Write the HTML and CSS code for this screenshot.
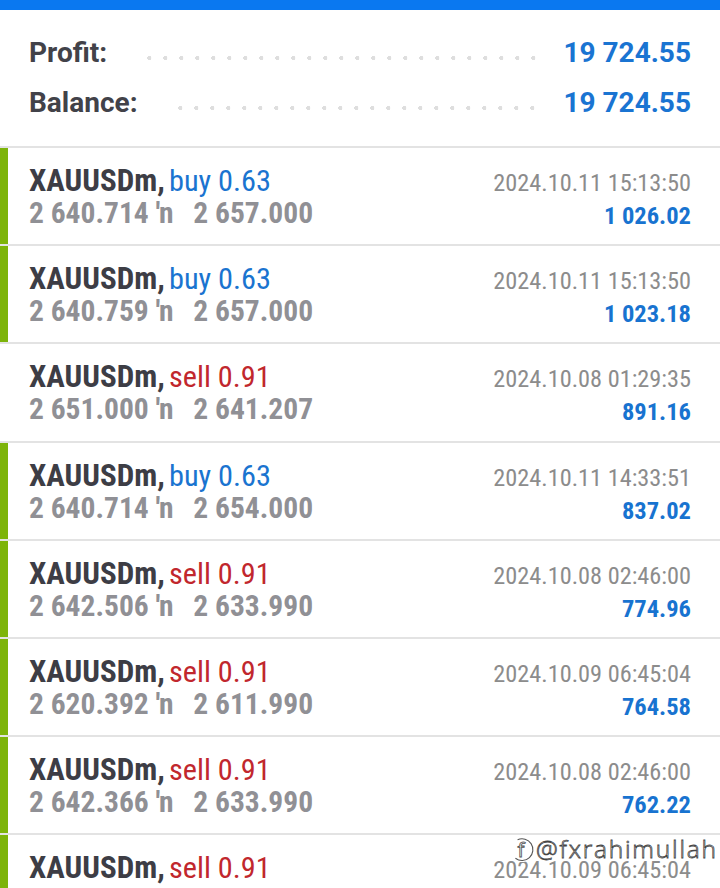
FILE: index.html
```html
<!DOCTYPE html>
<html lang="en">
<head>
  <meta charset="UTF-8" />
  <meta name="viewport" content="width=device-width, initial-scale=1.0"/>
  <title>History</title>
  <link rel="stylesheet" href="styles.css">
</head>
<body>
  <div class="top-bar"></div>

  <div class="summary">
    <div class="sum-row">
      <span class="sum-label">Profit:</span>
      <span class="leader"></span>
      <span class="sum-value">19 724.55</span>
    </div>
    <div class="sum-row balance">
      <span class="sum-label">Balance:</span>
      <span class="leader"></span>
      <span class="sum-value">19 724.55</span>
    </div>
  </div>

  <div class="trades">
    <div class="trade flag">
      <div class="trade-left">
        <div class="deal">XAUUSDm, <span class="buy">buy 0.63</span></div>
        <div class="prices">2 640.714 <span class="arrow">′n</span> 2 657.000</div>
      </div>
      <div class="trade-right">
        <div class="time">2024.10.11 15:13:50</div>
        <div class="profit">1 026.02</div>
      </div>
    </div>
    <div class="trade flag">
      <div class="trade-left">
        <div class="deal">XAUUSDm, <span class="buy">buy 0.63</span></div>
        <div class="prices">2 640.759 <span class="arrow">′n</span> 2 657.000</div>
      </div>
      <div class="trade-right">
        <div class="time">2024.10.11 15:13:50</div>
        <div class="profit">1 023.18</div>
      </div>
    </div>
    <div class="trade">
      <div class="trade-left">
        <div class="deal">XAUUSDm, <span class="sell">sell 0.91</span></div>
        <div class="prices">2 651.000 <span class="arrow">′n</span> 2 641.207</div>
      </div>
      <div class="trade-right">
        <div class="time">2024.10.08 01:29:35</div>
        <div class="profit">891.16</div>
      </div>
    </div>
    <div class="trade flag">
      <div class="trade-left">
        <div class="deal">XAUUSDm, <span class="buy">buy 0.63</span></div>
        <div class="prices">2 640.714 <span class="arrow">′n</span> 2 654.000</div>
      </div>
      <div class="trade-right">
        <div class="time">2024.10.11 14:33:51</div>
        <div class="profit">837.02</div>
      </div>
    </div>
    <div class="trade flag">
      <div class="trade-left">
        <div class="deal">XAUUSDm, <span class="sell">sell 0.91</span></div>
        <div class="prices">2 642.506 <span class="arrow">′n</span> 2 633.990</div>
      </div>
      <div class="trade-right">
        <div class="time">2024.10.08 02:46:00</div>
        <div class="profit">774.96</div>
      </div>
    </div>
    <div class="trade flag">
      <div class="trade-left">
        <div class="deal">XAUUSDm, <span class="sell">sell 0.91</span></div>
        <div class="prices">2 620.392 <span class="arrow">′n</span> 2 611.990</div>
      </div>
      <div class="trade-right">
        <div class="time">2024.10.09 06:45:04</div>
        <div class="profit">764.58</div>
      </div>
    </div>
    <div class="trade flag">
      <div class="trade-left">
        <div class="deal">XAUUSDm, <span class="sell">sell 0.91</span></div>
        <div class="prices">2 642.366 <span class="arrow">′n</span> 2 633.990</div>
      </div>
      <div class="trade-right">
        <div class="time">2024.10.08 02:46:00</div>
        <div class="profit">762.22</div>
      </div>
    </div>
    <div class="trade flag last">
      <div class="trade-left">
        <div class="deal">XAUUSDm, <span class="sell">sell 0.91</span></div>
      </div>
      <div class="trade-right">
        <div class="time">2024.10.09 06:45:04</div>
      </div>
    </div>
  </div>

  <!-- watermark -->
  <div class="watermark">
    <svg class="fb" width="26" height="26" viewBox="0 0 24 24">
      <path d="M7 3.5 A10 10 0 1 1 5 20.5" fill="none" stroke="#fff" stroke-width="3"/>
      <path d="M7 3.5 A10 10 0 1 1 5 20.5" fill="none" stroke="#555" stroke-width="1"/>
      <text x="7" y="19" font-family="Open Sans, sans-serif" font-size="19" fill="#fff" stroke="#555" stroke-width="0.8">f</text>
    </svg><span class="handle">@fxrahimullah</span>
  </div>
</body>
</html>
```

FILE: styles.css
```css
* { box-sizing: border-box; }
html, body {
  margin: 0;
  padding: 0;
  height: 100%;
  background-color: #fff;
  overflow: hidden;
  font-family: "Roboto Condensed", Roboto, sans-serif;
}
body { position: relative; }

.top-bar {
  height: 10px;
  background-color: #0a78f0;
}

/* Profit / Balance */
.summary {
  padding: 18px 29px 18px 29px;
  border-bottom: 2px solid #e3e3e3;
  font-family: Roboto, sans-serif;
}
.sum-row {
  display: flex;
  height: 50px;
  line-height: 50px;
  font-size: 28px;
  font-weight: bold;
}
.sum-label { color: #424249; }
.sum-value { color: #1a74d2; }
.leader {
  flex: 1;
  align-self: center;
  height: 4px;
  margin: 10px 20px 0 40px;
  background-image: radial-gradient(circle at 2.3px 2px, #dedede 1.9px, transparent 2.3px);
  background-size: 16px 4px;
  background-repeat: repeat-x;
}

/* list of deals */
.trade {
  display: flex;
  justify-content: space-between;
  height: 98.2px;
  padding: 16px 29px 0 29px;
  border-bottom: 2px solid #e3e3e3;
}
.trade.flag {
  box-shadow: inset 8px 0 #7db40a;
}
.trade.last {
  height: 54px;
  border-bottom: none;
}
.deal {
  font-size: 31px;
  line-height: 34px;
  font-weight: bold;
  color: #3d3d45;
}
.deal .buy,
.deal .sell {
  font-size: 30.3px;
  font-weight: normal;
  margin-left: -3px;
}
.buy { color: #1a74d0; }
.sell { color: #c1272d; }
.prices {
  font-size: 29.5px;
  line-height: 31px;
  font-weight: bold;
  color: #909095;
}
.arrow {
  letter-spacing: -1px;
  margin-right: 14px;
}
.trade-right {
  text-align: right;
}
.time {
  font-size: 24.3px;
  line-height: 37px;
  color: #8c8c8c;
}
.profit {
  font-size: 24.5px;
  line-height: 30.5px;
  font-weight: bold;
  color: #1873d0;
}

.watermark {
  position: absolute;
  left: 510px;
  top: 832px;
  display: flex;
  align-items: center;
  white-space: nowrap;
}
.watermark .handle {
  font-family: "Open Sans", sans-serif;
  font-weight: 300;
  font-size: 24.5px;
  letter-spacing: 1.8px;
  color: rgba(255, 255, 255, 0.92);
  -webkit-text-stroke: 0.8px #444;
}
```
